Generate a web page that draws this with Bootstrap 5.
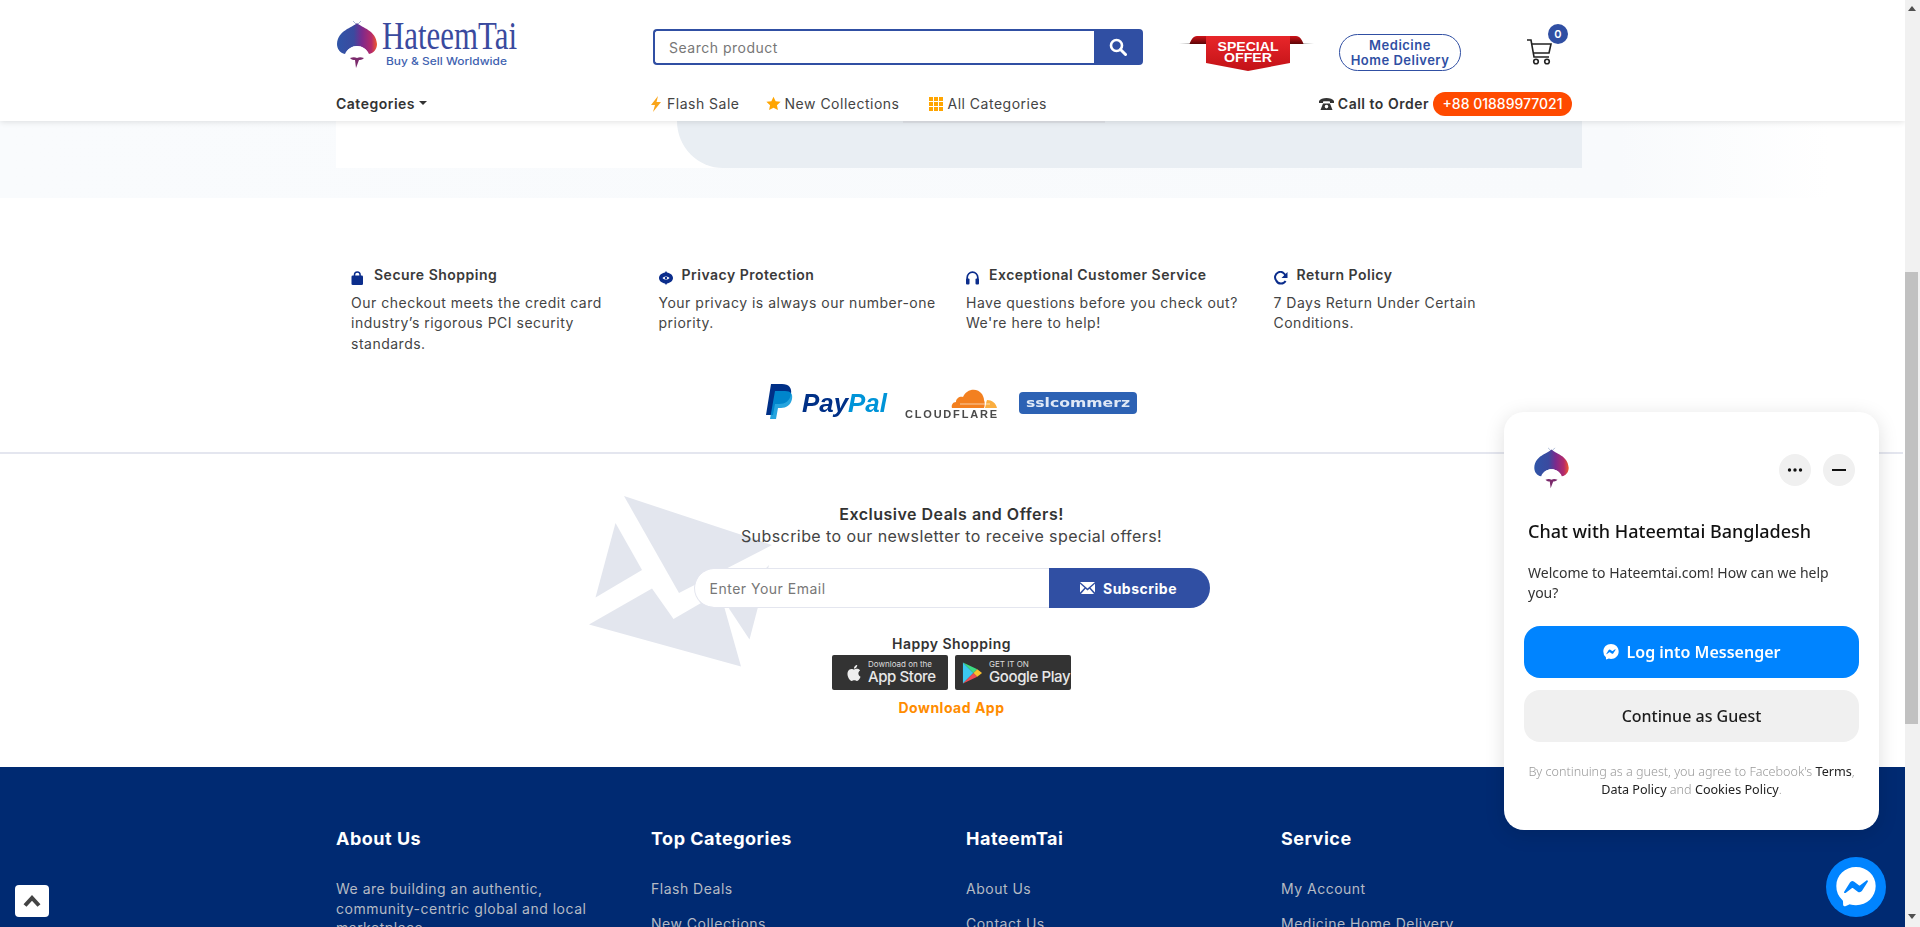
<!DOCTYPE html>
<html lang="en">
<head>
    <meta charset="UTF-8">
    <meta name="viewport" content="width=device-width, initial-scale=1.0">
    <title>HateemTai</title>
    <link href="https://cdn.jsdelivr.net/npm/bootstrap@5.3.0/dist/css/bootstrap.min.css" rel="stylesheet">
    <style>
        html, body {
            height: 100%;
            overflow: hidden;
        }
        body {
            font-family: Inter, "Liberation Sans", sans-serif;
            font-size: 14px;
            letter-spacing: .5px;
            color: #333;
            background: #fff;
        }
        button, input { letter-spacing: inherit; }
        svg text { letter-spacing: 0; }
        .page-frame { height: 100vh; overflow: hidden; }
        .page-main { width: 1905px; height: 927px; overflow: hidden; }

        /* fake scrollbar, the shot is taken scrolled down */
        .fake-bar { width: 15px; height: 927px; background: #f1f1f1; }
        .fake-thumb { width: 13px; height: 452px; margin-top: 261px; background: #c1c1c1; }
        .fake-up, .fake-down { width: 0; height: 0; margin-left: 3px; border-left: 4px solid transparent; border-right: 4px solid transparent; }
        .fake-up { margin-top: 6px; border-bottom: 5px solid #505050; }
        .fake-down { margin-top: 190px; border-top: 5px solid #505050; }

        .shell { width: 1270px; margin: 0 auto; padding-left: 18.5px; padding-right: 5.5px; }

        /* header */
        .top-head { height: 121px; background: #fff; box-shadow: 0 1px 6px rgba(0,0,0,.12); position: relative; z-index: 5; }
        .head-row1 { height: 87px; padding-top: 20px; }
        .brand-box { width: 317px; height: 50px; margin-top: -10px; }
        .search-box { width: 490px; height: 36px; margin-top: 9px; }
        .search-box .form-control { height: 36px; border: 2px solid #304fa3; border-right: 0; border-radius: 4px 0 0 4px; font-size: 14px; padding: 0 14px; box-shadow: none; }
        .search-box .form-control::placeholder, .mail-form .form-control::placeholder { color: #777; }
        .search-btn { width: 50px; background: #304fa3; border: 0; border-radius: 0 4px 4px 0; padding: 0; }
        .offer-pic { width: 135px; height: 37px; margin-left: 36px; margin-top: 15px; }
        .med-pill { width: 122px; height: 37px; margin-left: 25px; margin-top: 14px; border: 1px solid #304fa3; border-radius: 19px; color: #304fa3; font-size: 13px; font-weight: 600; line-height: 15px; }
        .cart-box { width: 40px; height: 40px; margin-left: 65px; margin-top: 18px; }
        .cart-count { position: absolute; left: 22px; top: -14px; width: 20px; height: 20px; border-radius: 50%; background: #304fa3; color: #fff; font-size: 11px; font-weight: 600; line-height: 20px; text-align: center; letter-spacing: 0; }
        .head-row2 { height: 33px; padding-bottom: 0; }
        .cat-link { width: 315px; font-weight: 600; color: #333; font-size: 14px; }
        .nav-item-top { margin-right: 30px; color: #444; font-size: 14px; }
        .nav-flash { margin-right: 26px; }
        .call-txt { font-weight: 600; color: #333; }
        .call-pill { width: 139px; height: 24px; margin-left: 4px; margin-right: 10px; background: #ff4a00; color: #fff; border-radius: 12px; font-size: 14px; font-weight: 500; letter-spacing: 0; }

        /* rest of the banner */
        .hero-band { height: 77px; background: linear-gradient(to right, #f9fbfd 0, #f8fafc 85%, #fff 96%); }
        .hero-plate { height: 47px; background: #fff; }
        .hero-left { width: 341px; }
        .hero-right { background: #e9eef3; border-bottom-left-radius: 46px 47px; }
        .hero-tab { width: 202px; height: 2px; margin-left: 226px; background: #dfe2e7; }

        /* feature blurbs */
        .feat-row { width: 1230px; margin-left: 15px; margin-top: 67px; }
        .feat-title { font-weight: 600; color: #3a3a3a; font-size: 14px; line-height: 20px; }
        .feat-icon { margin-top: 5px; flex-shrink: 0; }
        .feat-text { margin: 8px 0 0; line-height: 20.4px; font-size: 14px; color: #444; }
        .pay-logos { height: 36px; margin-top: 30px; margin-left: -15px; filter: blur(.3px); }
        .logo-gap1 { margin-left: 17px; }
        .logo-gap2 { margin-left: 22px; margin-top: 8px; }
        .rule-line { border-top: 2px solid #e4e6ef; margin: 32px 2px 0 0; }

        /* newsletter */
        .news-zone { height: 313px; padding-top: 49px; position: relative; }
        .env-back { position: absolute; left: 589px; top: 42px; }
        .news-in { position: relative; z-index: 1; padding-right: 2px; }
        .news-title { font-size: 16px; font-weight: 600; color: #333; line-height: 22px; }
        .news-sub { font-size: 16px; line-height: 22px; color: #444; letter-spacing: .42px; }
        .mail-form { width: 516px; height: 40px; margin: 21px auto 0; }
        .mail-form .form-control { height: 40px; border: 1px solid #e4e6ef; border-right: 0; border-radius: 20px 0 0 20px; font-size: 14px; padding: 0 15px; box-shadow: none; }
        .mail-btn { width: 162px; background: #304fa3; color: #fff; font-weight: 700; font-size: 14px; border: 0; border-radius: 0 20px 20px 0; padding: 0; }
        .happy-line { margin-top: 26px; font-weight: 600; font-size: 14px; line-height: 19px; color: #333; }
        .store-row { margin-top: 2px; gap: 7px; }
        .store-badge { width: 116px; height: 35px; background: #333; border-radius: 2px; color: #fff; text-decoration: none; gap: 6px; letter-spacing: 0; }
        .store-apple { padding-left: 14px; }
        .store-play { padding-left: 7px; }
        .store-small { font-size: 8px; line-height: 9px; color: #ddd; }
        .store-big { font-size: 15px; line-height: 16px; font-weight: 500; color: #e8e8e8; letter-spacing: -.4px; }
        .get-app { margin-top: 9px; font-weight: 700; font-size: 14px; color: #ff8c00; line-height: 18px; }

        /* footer, cut by the window */
        .foot-zone { background: #002a72; padding-top: 60px; height: 300px; }
        .foot-col { flex: 0 0 315px; }
        .foot-head { font-size: 18px; font-weight: 700; color: #fff; line-height: 24px; margin-bottom: 28px; }
        .foot-text { font-size: 14px; line-height: 19.6px; color: #b5bac4; margin: 0; }
        .foot-list li { font-size: 14px; line-height: 20px; color: #b5bac4; margin-bottom: 14.5px; }

        /* floats */
        .back-top { left: 15px; bottom: 10px; width: 34px; height: 32px; background: #fff; border-radius: 4px; z-index: 20; }
        .chat-panel { right: 41px; bottom: 97px; width: 375px; height: 418px; background: #fff; border-radius: 20px; box-shadow: 0 4px 20px rgba(0,0,0,.13); z-index: 20; font-family: "Noto Sans", "Open Sans", sans-serif; color: #1c1c1c; letter-spacing: 0; }
        .chat-top { height: 82px; padding: 35px 24px 0 29px; }
        .chat-circle { width: 32px; height: 32px; margin-top: 7px; margin-left: 12px; border-radius: 50%; background: #f0f0f0; }
        .chat-title { margin: 25px 24px 0; font-size: 18px; font-weight: 500; line-height: 24px; color: #111; }
        .chat-hello { margin: 20px 24px 0; font-size: 14px; line-height: 20px; color: #333; }
        .chat-btn { display: flex; width: 335px; height: 52px; margin: 12px 20px 0; border: 0; border-radius: 16px; font-size: 16px; font-weight: 500; align-items: center; justify-content: center; gap: 8px; }
        .chat-blue { background: #0084ff; color: #fff; margin-top: 23px; font-weight: 600; }
        .chat-grey { background: #f0f0f0; color: #1c1c1c; }
        .chat-legal { margin: 21px 16px 0; font-size: 12.6px; line-height: 18px; color: #999; text-align: center; font-weight: 300; }
        .chat-legal b { font-weight: 400; color: #222; }
        .chat-fab { right: 34px; bottom: 10px; width: 60px; height: 60px; border-radius: 50%; background: #0084ff; z-index: 20; }
    </style>
</head>
<body>
    <svg width="0" height="0" class="position-absolute">
        <defs>
            <linearGradient id="turbanGrad" x1="0" y1="0" x2="1" y2="0">
                <stop offset="0" stop-color="#2f55a8"/>
                <stop offset=".42" stop-color="#3b4a9f"/>
                <stop offset=".62" stop-color="#7b2a8c"/>
                <stop offset=".86" stop-color="#b52a6a"/>
                <stop offset="1" stop-color="#ee5a2c"/>
            </linearGradient>
            <symbol id="turbanMark" viewBox="0 0 40 50">
                <path d="M16 1l4 4 4-4" fill="none" stroke="#8fa3c8" stroke-width=".8"/>
                <path d="M20 3C15 8 1 10 0 24c0 5 3 9 8 10 2-5 7-8 12-8s10 3 12 8c5-1 8-5 8-10C39 10 25 8 20 3z" fill="url(#turbanGrad)"/>
                <path d="M9 33c2 3 6 4 11 4s9-1 11-4c-2-4-6-7-11-7s-9 3-11 7z" fill="#fff"/>
                <path d="M13 38c3-1 5-1 7 0 2-1 4-1 7 0-2 2-4 2-5 2l-3 8-1-8c-2 0-3 0-5-2z" fill="#7b2a6c"/>
            </symbol>
            <symbol id="msgrMark" viewBox="0 0 24 25">
                <path d="M.001 11.639C.001 4.949 5.241 0 12.001 0S24 4.95 24 11.639c0 6.689-5.24 11.638-12 11.638-1.21 0-2.38-.16-3.47-.46a.96.96 0 00-.64.05l-2.39 1.05a.96.96 0 01-1.35-.85l-.07-2.14a.97.97 0 00-.32-.68A11.39 11.389 0 01.002 11.64zm8.32-2.19l-3.52 5.6c-.35.53.32 1.139.82.75l3.79-2.87c.25-.2.6-.2.86 0l2.8 2.1c.84.63 2.04.4 2.6-.48l3.52-5.6c.35-.53-.32-1.13-.82-.75l-3.79 2.87c-.25.2-.6.2-.86 0l-2.8-2.1a1.8 1.8 0 00-2.6.48z" fill="#fff" fill-rule="evenodd"/>
            </symbol>
        </defs>
    </svg>

    <div class="page-frame d-flex">
        <div class="page-main">
            <header class="top-head">
                <div class="shell">
                    <div class="head-row1 d-flex align-items-start">
                        <a class="brand-box d-block" href="#">
                            <svg width="190" height="60" viewBox="0 -10 190 60">
                                <use href="#turbanMark" x="1" y="0" width="40" height="50"/>
                                <text x="46" y="29" font-family="'Liberation Serif', serif" font-size="40" fill="#3a4a9e" textLength="135" lengthAdjust="spacingAndGlyphs">HateemTai</text>
                                <text x="50" y="45" font-family="Inter, sans-serif" font-size="10.5" font-weight="500" fill="#3f62b0" textLength="121" lengthAdjust="spacingAndGlyphs">Buy &amp; Sell Worldwide</text>
                            </svg>
                        </a>
                        <form class="search-box input-group flex-nowrap">
                            <input type="text" class="form-control" placeholder="Search product">
                            <button class="search-btn d-flex align-items-center justify-content-center" type="button">
                                <svg width="18" height="18" viewBox="0 0 18 18"><circle cx="7.5" cy="7.5" r="5.5" fill="none" stroke="#fff" stroke-width="2.6"/><path d="M11.5 11.5L16.5 16.5" stroke="#fff" stroke-width="3" stroke-linecap="round"/></svg>
                            </button>
                        </form>
                        <svg class="offer-pic" viewBox="0 0 135 37">
                            <defs>
                                <linearGradient id="ribbonRed" x1="0" y1="0" x2="0" y2="1"><stop offset="0" stop-color="#e8262a"/><stop offset="1" stop-color="#c21217"/></linearGradient>
                                <linearGradient id="ribbonFold" x1="0" y1="0" x2="0" y2="1"><stop offset="0" stop-color="#d01318"/><stop offset="1" stop-color="#5c0507"/></linearGradient>
                                <linearGradient id="ribbonLine" x1="0" y1="0" x2="1" y2="0"><stop offset="0" stop-color="#fff"/><stop offset=".12" stop-color="#999"/><stop offset=".88" stop-color="#999"/><stop offset="1" stop-color="#fff"/></linearGradient>
                            </defs>
                            <rect x="0" y="8" width="135" height="1" fill="url(#ribbonLine)"/>
                            <path d="M10.500 9C12 5 14 1 18 1h12v8z" fill="url(#ribbonFold)"/>
                            <path d="M124.500 9C123 5 121 1 117 1h-12v8z" fill="url(#ribbonFold)"/>
                            <path d="M27 1h84v27l-42 8-42-8z" fill="url(#ribbonRed)"/>
                            <text x="69" y="16" text-anchor="middle" font-family="'Liberation Sans', sans-serif" font-weight="700" font-size="12.500" fill="#fff" textLength="61" lengthAdjust="spacingAndGlyphs">SPECIAL</text>
                            <text x="69" y="27" text-anchor="middle" font-family="'Liberation Sans', sans-serif" font-weight="700" font-size="12.500" fill="#fff" textLength="48" lengthAdjust="spacingAndGlyphs">OFFER</text>
                        </svg>
                        <a class="med-pill d-flex align-items-center justify-content-center text-center text-decoration-none" href="#">Medicine<br>Home Delivery</a>
                        <div class="cart-box position-relative">
                            <svg width="30" height="28" viewBox="0 0 30 28"><path d="M1 2h4l3 17h15" fill="none" stroke="#222" stroke-width="1.6"/><path d="M6 6h19l-2 9H8" fill="none" stroke="#222" stroke-width="1.6"/><circle cx="10" cy="23.500" r="2.300" fill="none" stroke="#222" stroke-width="1.600"/><circle cx="21" cy="23.500" r="2.300" fill="none" stroke="#222" stroke-width="1.600"/></svg>
                            <span class="cart-count">0</span>
                        </div>
                    </div>
                    <div class="head-row2 d-flex align-items-center">
                        <a class="cat-link text-decoration-none" href="#"><span class="dropdown-toggle">Categories</span></a>
                        <a class="nav-item-top nav-flash d-flex align-items-center gap-1 text-decoration-none" href="#">
                            <svg width="12" height="16" viewBox="0 0 12 16"><path d="M7 0L0 9h4l-2 7 8-10H5.500z" fill="#f9a51a"/></svg>Flash Sale
                        </a>
                        <a class="nav-item-top d-flex align-items-center gap-1 text-decoration-none" href="#">
                            <svg width="15" height="15" viewBox="0 0 24 24"><path d="M12 1l3.400 7.300 8 .9-5.900 5.400 1.600 7.900L12 18.600l-7.100 3.900 1.600-7.900L.6 9.200l8-.9z" fill="#ffa500"/></svg>New Collections
                        </a>
                        <a class="nav-item-top d-flex align-items-center gap-1 text-decoration-none" href="#">
                            <svg width="14" height="14" viewBox="0 0 14 14" fill="#ffa500"><path d="M0 0h4v4H0zM5 0h4v4H5zM10 0h4v4h-4zM0 5h4v4H0zM5 5h4v4H5zM10 5h4v4h-4zM0 10h4v4H0zM5 10h4v4H5zM10 10h4v4h-4z"/></svg>All Categories
                        </a>
                        <div class="ms-auto d-flex align-items-center">
                            <svg class="me-1" width="15" height="13" viewBox="0 0 15 13" fill="#333"><path d="M0 4C2 0 13 0 15 4v2h-4V4.500C9 4 6 4 4 4.500V6H0z"/><path d="M4 6.500h7l2.500 6.500h-12zM7.500 7.800a1.800 1.800 0 100 3.600 1.800 1.800 0 000-3.600z" fill-rule="evenodd"/></svg>
                            <span class="call-txt">Call to Order</span>
                            <a class="call-pill d-flex align-items-center justify-content-center text-decoration-none" href="#">+88 01889977021</a>
                        </div>
                    </div>
                </div>
            </header>

            <section class="hero-band">
                <div class="shell">
                    <div class="hero-plate d-flex">
                        <div class="hero-left"></div>
                        <div class="hero-right flex-grow-1"><div class="hero-tab"></div></div>
                    </div>
                </div>
            </section>

            <section class="shell">
                <div class="feat-row row g-0">
                    <div class="col-3">
                        <div class="feat-title d-flex align-items-center gap-2">
                            <svg class="feat-icon" width="15" height="14" viewBox="0 0 15 14"><path d="M3.500 6V3.800a2.800 2.800 0 015.600 0V6" fill="none" stroke="#0b2d8c" stroke-width="1.500"/><rect x=".5" y="4.500" width="11.500" height="9.500" rx="1.300" fill="#0b2d8c"/></svg>
                            Secure Shopping
                        </div>
                        <p class="feat-text">Our checkout meets the credit card<br>industry’s rigorous PCI security<br>standards.</p>
                    </div>
                    <div class="col-3">
                        <div class="feat-title d-flex align-items-center gap-2">
                            <svg class="feat-icon" width="15" height="14" viewBox="0 0 15 14"><path d="M7 0l1 1.500C11 2 14 4 14 7c0 3-3 5-6 5.500L7 14l-1-1.500C3 12 0 10 0 7c0-3 3-5 6-5.500z" fill="#0b2d8c"/><path d="M3.500 7c2-2 5-2 7 0-2 2-5 2-7 0z" fill="#fff"/><circle cx="7" cy="7" r="1.200" fill="#0b2d8c"/></svg>
                            Privacy Protection
                        </div>
                        <p class="feat-text">Your privacy is always our number-one<br>priority.</p>
                    </div>
                    <div class="col-3">
                        <div class="feat-title d-flex align-items-center gap-2">
                            <svg class="feat-icon" width="15" height="14" viewBox="0 0 15 14"><path d="M1.200 9V6.500a5.300 5.300 0 0110.600 0V9" fill="none" stroke="#0b2d8c" stroke-width="1.700"/><rect y="7.500" width="3.500" height="6" rx="1" fill="#0b2d8c"/><rect x="9.500" y="7.500" width="3.500" height="6" rx="1" fill="#0b2d8c"/></svg>
                            Exceptional Customer Service
                        </div>
                        <p class="feat-text">Have questions before you check out?<br>We're here to help!</p>
                    </div>
                    <div class="col-3">
                        <div class="feat-title d-flex align-items-center gap-2">
                            <svg class="feat-icon" width="15" height="14" viewBox="0 0 15 14"><path d="M11.600 5.500A5.300 5.300 0 102.200 9.500a5.300 5.300 0 009.400.5" fill="none" stroke="#0b2d8c" stroke-width="2"/><path d="M13.500 1v6h-6z" fill="#0b2d8c"/></svg>
                            Return Policy
                        </div>
                        <p class="feat-text">7 Days Return Under Certain<br>Conditions.</p>
                    </div>
                </div>
                <div class="pay-logos d-flex justify-content-center align-items-start">
                    <svg width="122" height="36" viewBox="0 0 122 36">
                        <path d="M5 0h11c7 0 10 4 9 10-1 7-6 10-12 10H9L7 31H0z" fill="#003087"/>
                        <path d="M9 7h10c6 0 8 3 7 8-1 6-6 9-11 9h-3l-2 11H4z" fill="#0094d8" opacity=".85"/>
                        <text x="36" y="28" font-family="'Liberation Sans', sans-serif" font-weight="700" font-style="italic" font-size="25" fill="#003087" textLength="85" lengthAdjust="spacingAndGlyphs">Pay<tspan fill="#0094d8">Pal</tspan></text>
                    </svg>
                    <svg class="logo-gap1" width="92" height="36" viewBox="0 0 92 36">
                        <path d="M47 24c-1-3 1-6 4-6 0-4 4-6 7-5 3-8 14-10 19-3 1 2 2 4 2 6 1 3 1 5 0 8z" fill="#f38020"/>
                        <path d="M80 24c1-3 1-6 2-8 5 0 9 3 10 8z" fill="#faae40"/>
                        <path d="M55 20h30" stroke="#fff" stroke-width=".6"/>
                        <text x="0" y="34" font-family="'Liberation Sans', sans-serif" font-weight="700" font-size="11" fill="#4a4a4a" textLength="92">CLOUDFLARE</text>
                    </svg>
                    <svg class="logo-gap2" width="118" height="22" viewBox="0 0 118 22">
                        <rect width="118" height="22" rx="4" fill="#2d62b4"/>
                        <text x="59" y="15" text-anchor="middle" font-family="'DejaVu Sans', sans-serif" font-weight="700" font-size="13" fill="#dfe8f6" textLength="104" lengthAdjust="spacingAndGlyphs">sslcommerz</text>
                    </svg>
                </div>
            </section>
            <div class="rule-line"></div>

            <section class="news-zone text-center">
                <svg class="env-back" width="183" height="171" viewBox="0 0 183 171" fill="#e3e6ee">
                    <path d="M35 0L183 49 90 97z"/>
                    <path d="M26.500 27L53 74 6.500 101.500z"/>
                    <path d="M0 128.500L63 92.500 84.500 123 131 96 152 170.500z"/>
                    <path d="M180 69L160.500 143.500 140 112.500z"/>
                </svg>
                <div class="news-in">
                    <div class="news-title">Exclusive Deals and Offers!</div>
                    <div class="news-sub">Subscribe to our newsletter to receive special offers!</div>
                    <form class="mail-form input-group flex-nowrap">
                        <input type="email" class="form-control" placeholder="Enter Your Email">
                        <button class="mail-btn d-flex align-items-center justify-content-center gap-2" type="button">
                            <svg width="15" height="12" viewBox="0 0 15 12" fill="#fff"><path d="M0 0h15L7.500 6.500zM0 1.800V10.500L4.500 5.800zM15 1.800V10.500L10.500 5.800zM1 12L5.500 6.800 7.500 8.500 9.500 6.800 14 12z"/></svg>
                            Subscribe
                        </button>
                    </form>
                    <div class="happy-line">Happy Shopping</div>
                    <div class="store-row d-flex justify-content-center">
                        <a class="store-badge store-apple d-flex align-items-center text-start" href="#">
                            <svg width="16" height="20" viewBox="0 0 24 24" fill="#eee"><path d="M12.152 6.896c-.948 0-2.415-1.078-3.960-1.040-2.040.027-3.910 1.183-4.961 3.014-2.117 3.675-.546 9.103 1.519 12.090 1.013 1.454 2.208 3.090 3.792 3.039 1.520-.065 2.090-.987 3.935-.987 1.831 0 2.350.987 3.960.948 1.637-.026 2.676-1.480 3.676-2.948 1.156-1.688 1.636-3.325 1.662-3.415-.039-.013-3.182-1.221-3.220-4.857-.026-3.040 2.480-4.494 2.597-4.559-1.429-2.090-3.623-2.324-4.390-2.376-2-.156-3.675 1.090-4.610 1.090zM15.530 3.830c.843-1.012 1.400-2.427 1.245-3.830-1.207.052-2.662.805-3.532 1.818-.780.896-1.454 2.338-1.273 3.714 1.338.104 2.715-.688 3.559-1.701"/></svg>
                            <span class="d-block"><span class="store-small d-block">Download on the</span><span class="store-big d-block">App Store</span></span>
                        </a>
                        <a class="store-badge store-play d-flex align-items-center text-start" href="#">
                            <svg width="21" height="24" viewBox="0 0 22 24"><path d="M1 1l11 11L1 23z" fill="#3bc8f0"/><path d="M1 1l15 7-4 4z" fill="#3ddc84"/><path d="M1 23l15-7-4-4z" fill="#ef4b55"/><path d="M16 8l5 4-5 4-4-4z" fill="#fbc02d"/></svg>
                            <span class="d-block"><span class="store-small d-block">GET IT ON</span><span class="store-big d-block">Google Play</span></span>
                        </a>
                    </div>
                    <div class="get-app">Download App</div>
                </div>
            </section>

            <footer class="foot-zone">
                <div class="shell d-flex">
                    <div class="foot-col">
                        <div class="foot-head">About Us</div>
                        <p class="foot-text">We are building an authentic,<br>community-centric global and local<br>marketplace</p>
                    </div>
                    <div class="foot-col">
                        <div class="foot-head">Top Categories</div>
                        <ul class="foot-list list-unstyled m-0"><li>Flash Deals</li><li>New Collections</li></ul>
                    </div>
                    <div class="foot-col">
                        <div class="foot-head">HateemTai</div>
                        <ul class="foot-list list-unstyled m-0"><li>About Us</li><li>Contact Us</li></ul>
                    </div>
                    <div class="foot-col">
                        <div class="foot-head">Service</div>
                        <ul class="foot-list list-unstyled m-0"><li>My Account</li><li>Medicine Home Delivery</li></ul>
                    </div>
                </div>
            </footer>
        </div>
        <div class="fake-bar flex-shrink-0">
            <div class="fake-up"></div>
            <div class="fake-thumb"></div>
            <div class="fake-down"></div>
        </div>
    </div>

    <a class="back-top position-fixed d-flex align-items-center justify-content-center" href="#">
        <svg width="18" height="12" viewBox="0 0 18 12"><path d="M2 10.500L9 3l7 7.500" fill="none" stroke="#444" stroke-width="4"/></svg>
    </a>

    <div class="chat-panel position-fixed">
        <div class="chat-top d-flex">
            <svg width="37" height="43"><use href="#turbanMark" width="37" height="43"/></svg>
            <div class="ms-auto d-flex">
                <div class="chat-circle d-flex align-items-center justify-content-center">
                    <svg width="16" height="4" viewBox="0 0 16 4" fill="#111"><circle cx="2.500" cy="2" r="1.700"/><circle cx="8" cy="2" r="1.700"/><circle cx="13.500" cy="2" r="1.700"/></svg>
                </div>
                <div class="chat-circle d-flex align-items-center justify-content-center">
                    <svg width="14" height="2" viewBox="0 0 14 2"><rect width="14" height="2" fill="#111"/></svg>
                </div>
            </div>
        </div>
        <div class="chat-title">Chat with Hateemtai Bangladesh</div>
        <div class="chat-hello">Welcome to Hateemtai.com! How can we help you?</div>
        <button class="chat-btn chat-blue" type="button"><svg width="16" height="16"><use href="#msgrMark" width="16" height="16"/></svg>Log into Messenger</button>
        <button class="chat-btn chat-grey" type="button">Continue as Guest</button>
        <div class="chat-legal">By continuing as a guest, you agree to Facebook's <b>Terms</b>,<br><b>Data Policy</b> and <b>Cookies Policy</b>.</div>
    </div>

    <a class="chat-fab position-fixed d-flex align-items-center justify-content-center" href="#">
        <svg width="40" height="41"><use href="#msgrMark" width="40" height="41"/></svg>
    </a>

    <script src="https://cdn.jsdelivr.net/npm/bootstrap@5.3.0/dist/js/bootstrap.bundle.min.js"></script>
</body>
</html>
